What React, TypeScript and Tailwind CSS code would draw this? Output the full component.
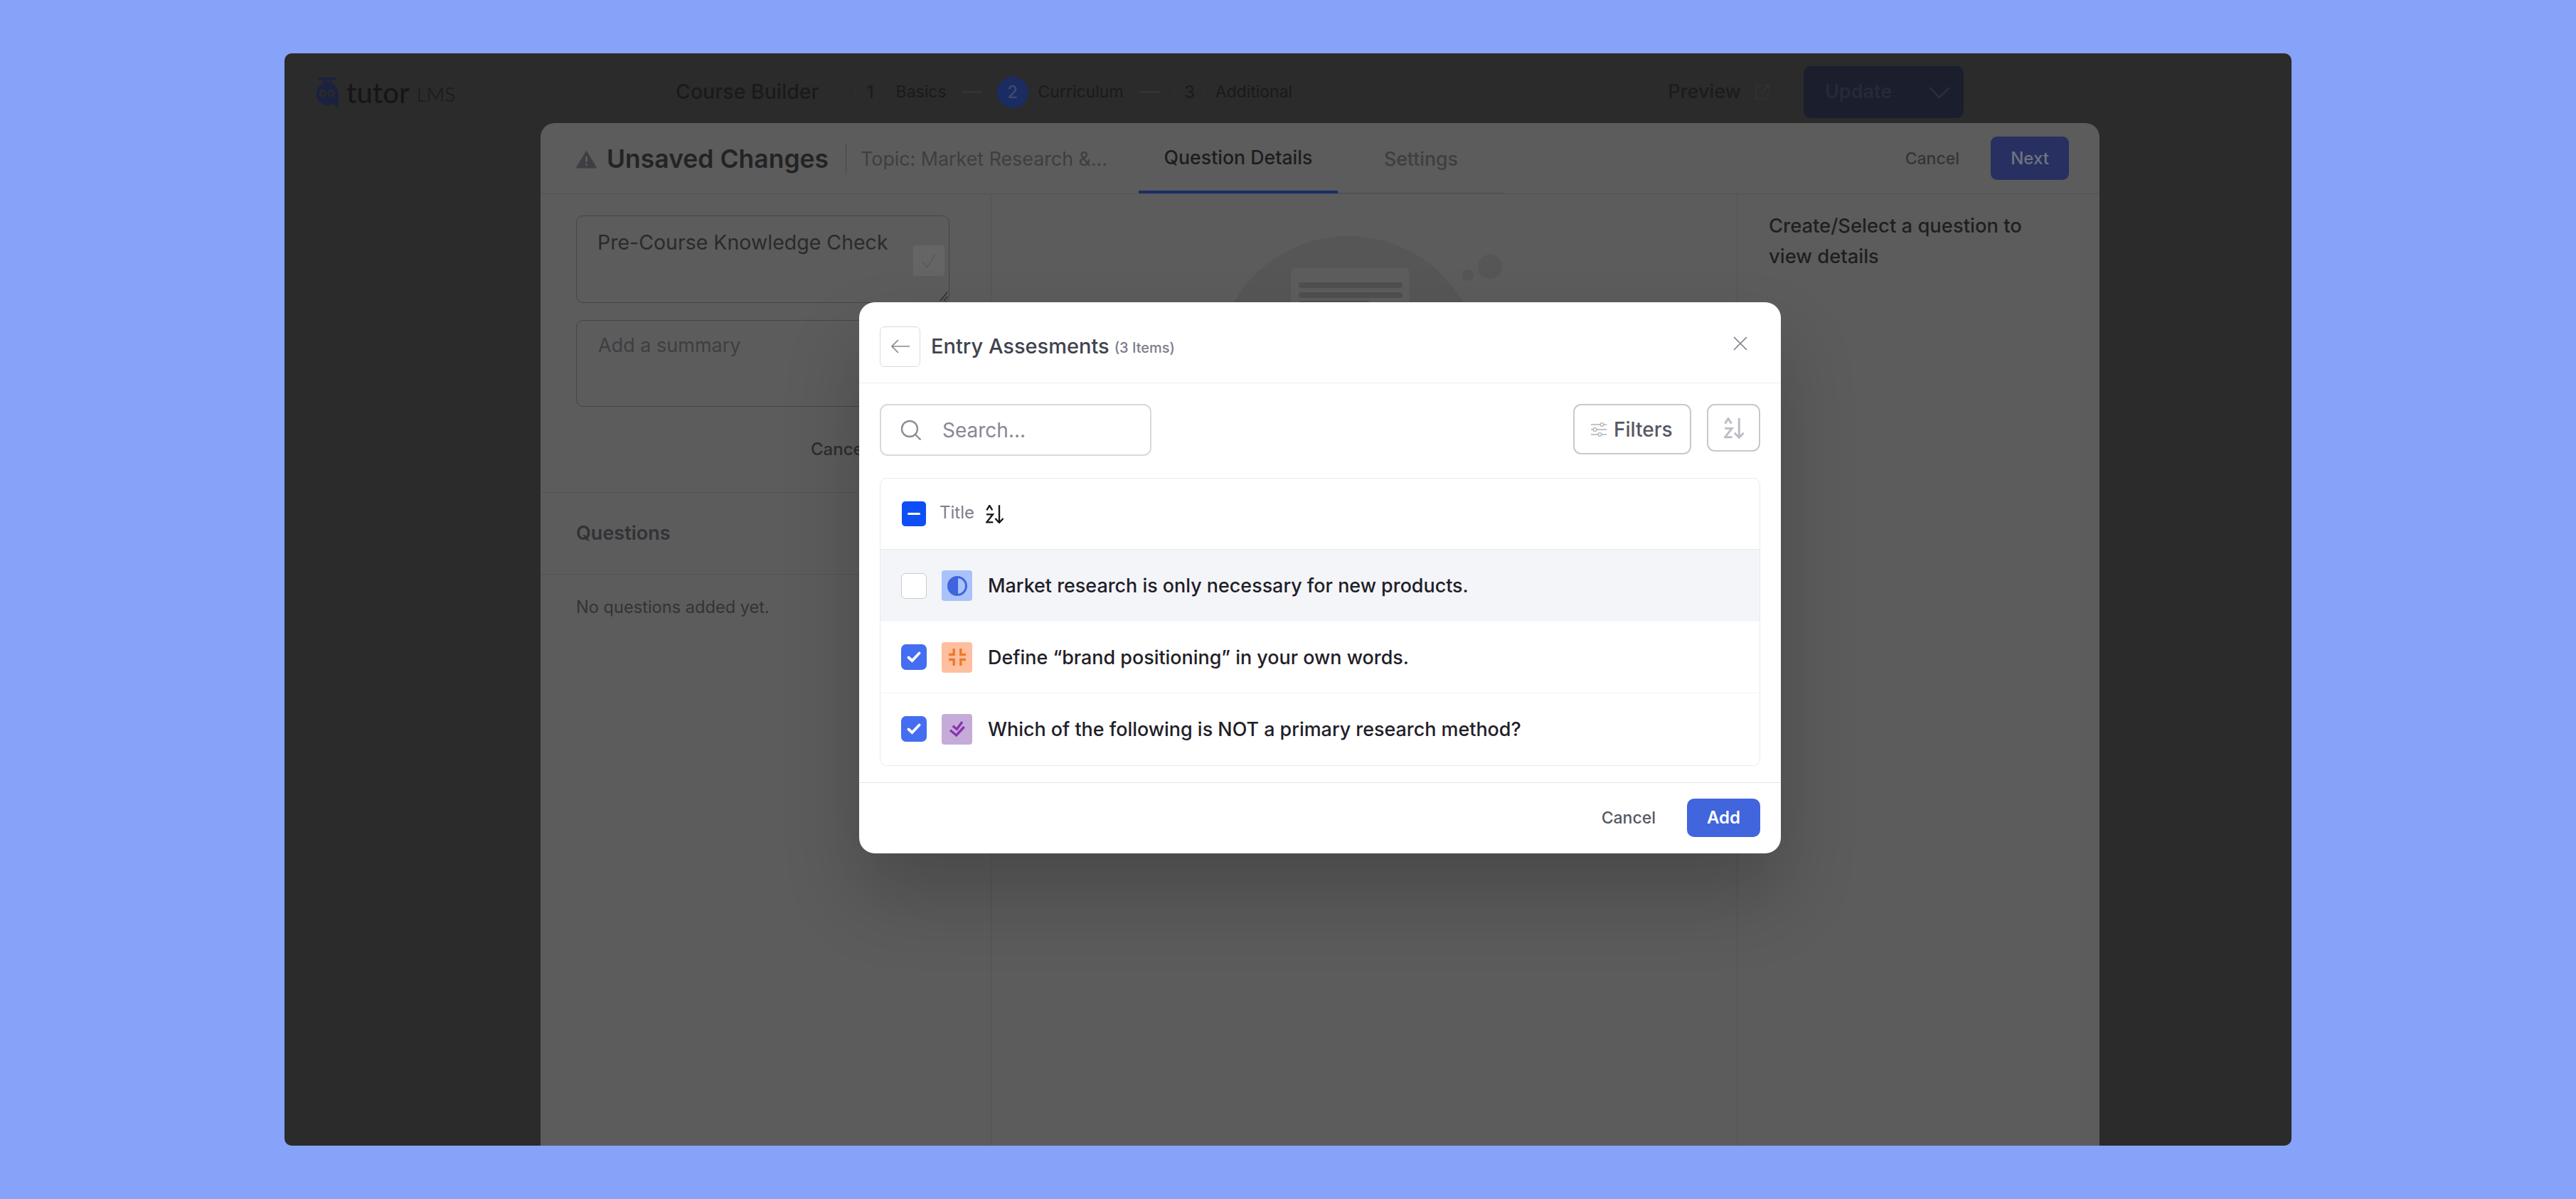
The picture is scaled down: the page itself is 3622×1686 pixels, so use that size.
import React from "react";

function AzIcon({ className, sw = 6 }: { className?: string; sw?: number }) {
  return (
    <svg viewBox="0 0 75 78" fill="none" stroke="currentColor" strokeWidth={sw} className={className}>
      <path d="M4 22 L16 3 L28 22" />
      <path d="M3 40 H30 L4 73 H31" />
      <path d="M57 1 V75" />
      <path d="M40 57 L57 75 L74 57" />
    </svg>
  );
}

function Owl() {
  return (
    <svg viewBox="0 0 32 42" className="w-[32px] h-[42px] shrink-0">
      <rect x="3" y="0" width="26" height="3.4" rx="1" fill="#1b2240" />
      <path d="M11 3H21L23 9H9Z" fill="#1b2240" />
      <path d="M16 7A16 16 0 0 1 32 23V42H30L24.5 37A16 16 0 1 1 16 7Z" fill="#1b2240" />
      <rect x="13" y="3.5" width="2" height="3" fill="#2b2b2b" />
      <rect x="17" y="3.5" width="2" height="3" fill="#2b2b2b" />
      <circle cx="10" cy="22" r="5.2" fill="#2b2b2b" />
      <circle cx="22" cy="22" r="5.2" fill="#2b2b2b" />
      <circle cx="10.5" cy="22" r="2.6" fill="#1b2240" />
      <circle cx="21.5" cy="22" r="2.6" fill="#1b2240" />
    </svg>
  );
}

function Check() {
  return (
    <div className="w-[36px] h-[36px] rounded-[7px] bg-[#446df2] flex items-center justify-center shrink-0">
      <svg viewBox="0 0 20 16" fill="none" stroke="#fff" strokeWidth="3.8" strokeLinecap="round" className="w-[20px] h-[16px]">
        <path d="M2.5 8.5 L7.5 13 L17.5 2.5" />
      </svg>
    </div>
  );
}

function Row({
  box,
  tile,
  icon,
  text,
  className,
}: {
  box: React.ReactNode;
  tile: string;
  icon: React.ReactNode;
  text: string;
  className: string;
}) {
  return (
    <div className={`flex items-center pl-[29px] ${className}`}>
      {box}
      <div className={`ml-[21px] w-[43px] h-[43px] rounded-[4px] flex items-center justify-center shrink-0 ${tile}`}>{icon}</div>
      <span className="ml-[22px] text-[26.9px] font-medium text-[#1f2028] leading-none">{text}</span>
    </div>
  );
}

function Step({ n, label, line, active }: { n: string; label: string; line?: boolean; active?: boolean }) {
  return (
    <div className="flex items-center">
      <div
        className={`w-[44px] h-[44px] rounded-full flex items-center justify-center text-[24px] font-medium ${
          active ? "bg-[#1b2c63] text-[#3f4a6e]" : "border border-[#303030] text-[#1c1c1c]"
        }`}
      >
        {n}
      </div>
      <span className="ml-[14px] text-[23px] text-[#1a1a1a]">{label}</span>
      {line && <div className="ml-[22px] w-[28px] h-[3px] bg-[#333333]" />}
    </div>
  );
}

export default function App() {
  return (
    <div className="w-[3622px] h-[1686px] bg-[#87a3f9] pt-[75px] pl-[400px] overflow-hidden font-['Inter',sans-serif]">
      <div className="relative w-[2822px] h-[1536px] rounded-[10px] overflow-hidden bg-[#2b2b2b] flex flex-col">
        {/* top bar */}
        <div className="h-[98px] shrink-0 pt-[18px] pl-[44px] pr-[461px] flex items-start">
          <div className="h-[73px] w-full flex items-center">
            <div className="flex items-center w-[194px]">
              <Owl />
              <span className="ml-[11px] text-[40px] font-medium text-[#161616] leading-none font-['Lato',sans-serif]">tutor</span>
              <span className="ml-[10px] text-[28px] font-light text-[#191919] leading-none mt-[5px] font-['Lato',sans-serif]">LMS</span>
            </div>
            <span className="ml-[312px] text-[28.5px] font-medium text-[#1a1a1a]">Course Builder</span>
            <div className="ml-[50px] flex items-center gap-[21px]">
              <Step n="1" label="Basics" line />
              <Step n="2" label="Curriculum" line active />
              <Step n="3" label="Additional" />
            </div>
            <span className="ml-auto text-[27px] font-medium text-[#1c1c1c]">Preview</span>
            <svg viewBox="0 0 24 24" fill="none" stroke="#333333" strokeWidth="1.6" className="ml-[18px] w-[24px] h-[26px]">
              <path d="M12 3H3V21H20V12M11 13L21 2M15 2H21V8" />
            </svg>
            <div className="ml-[46px] w-[225px] h-[73px] rounded-[10px] bg-[#1a1e2d] flex items-center pl-[30px]">
              <span className="text-[27px] font-semibold text-[#252a3a]">Update</span>
              <svg viewBox="0 0 30 16" fill="none" stroke="#2b3042" strokeWidth="2.4" className="ml-[52px] w-[30px] h-[16px]">
                <path d="M1 1 L15 15 L29 1" />
              </svg>
            </div>
          </div>
        </div>

        {/* panel */}
        <div className="ml-[360px] w-[2192px] flex-1 rounded-t-[20px] bg-[#5c5c5c] flex flex-col min-h-0">
          <div className="h-[100px] shrink-0 border-b border-[#535353] flex items-center pl-[50px] pr-[43px] pt-[2px]">
            <svg viewBox="0 0 30 26" className="w-[29px] h-[26px] shrink-0">
              <path d="M15 1 L29 24 Q29.5 25.5 28 25.5 H2 Q0.5 25.5 1 24 Z" fill="#3f3f43" stroke="#3f3f43" strokeLinejoin="round" />
              <path d="M15 9V17M15 19.5V22" stroke="#6a6a6d" strokeWidth="2" />
            </svg>
            <span className="ml-[14px] text-[35.5px] font-semibold text-[#232326] whitespace-nowrap">Unsaved Changes</span>
            <div className="ml-[24px] w-px h-[43px] bg-[#464649]" />
            <span className="ml-[20px] text-[26.8px] text-[#3e3e42] whitespace-nowrap">Topic: Market Research &amp;...</span>
            <div className="ml-[44px] self-stretch -mt-[2px] flex relative">
              <div className="w-[280px] border-b-[4px] border-[#1a2d68] rounded-b-none pt-[2px] flex items-center justify-center text-[26.7px] font-medium text-[#1c1c1f]">
                Question Details
              </div>
              <div className="w-[234px] border-b border-[#4d4d4d] pt-[2px] flex items-center justify-center text-[26.7px] font-medium text-[#3e3e42]">
                Settings
              </div>
            </div>
            <span className="ml-auto text-[23px] font-medium text-[#343438]">Cancel</span>
            <div className="ml-[44px] -mt-[2px] w-[110px] h-[61px] rounded-[9px] bg-[#273060] flex items-center justify-center text-[24px] font-medium text-[#6f7480]">
              Next
            </div>
          </div>
          <div className="flex-1 flex min-h-0">
            <div className="w-[634px] shrink-0 border-r border-[#535353] flex flex-col">
              <div className="pt-[30px] px-[50px]">
                <div className="relative w-[525px] h-[123px] rounded-[10px] border border-[#454548] pl-[29px] pt-[17px] text-[28.5px] leading-[40px] text-[#2a2a2d]">
                  Pre-Course Knowledge Check
                  <div className="absolute left-[473px] top-[41px] w-[44px] h-[43px] rounded-[3px] bg-[#656565] flex items-center justify-center">
                    <svg viewBox="0 0 22 22" fill="none" stroke="#585858" strokeWidth="1.4" className="w-[22px] h-[22px]">
                      <path d="M2 12 L8 20 L20 2" />
                    </svg>
                  </div>
                  <svg viewBox="0 0 12 14" fill="none" stroke="#2a2a2a" strokeWidth="1.3" className="absolute right-[1px] bottom-[1px] w-[12px] h-[14px]">
                    <path d="M1 13 L11 1 M6 13 L11 7" />
                  </svg>
                </div>
                <div className="mt-[24px] w-[525px] h-[122px] rounded-[10px] border border-[#454548] pl-[30px] pt-[15px] text-[27px] leading-[40px] text-[#3e3e42]">
                  Add a summary
                </div>
                <div className="mt-[48px] pl-[330px] text-[24px] font-medium leading-none text-[#2c2c30]">Cancel</div>
              </div>
              <div className="mt-[48px] h-[116px] border-y border-[#535353] flex items-center pl-[50px] text-[27px] font-semibold text-[#323236]">
                Questions
              </div>
              <div className="pl-[50px] pt-[31px] text-[23.6px] leading-[30px] text-[#333337]">No questions added yet.</div>
            </div>
            <div className="w-[1049px] shrink-0 border-r border-[#535353] pt-[59px]">
              <svg viewBox="0 0 480 200" className="ml-[270px] w-[480px] h-[200px]">
                <circle cx="232" cy="186" r="186" fill="#565656" />
                <path d="M151 53 Q151 45 159 45 H310 Q318 45 318 53 V200 H151 Z" fill="#5d5d5d" />
                <rect x="162" y="65" width="146" height="8" rx="4" fill="#4f4f4f" />
                <rect x="162" y="79" width="146" height="8" rx="4" fill="#4f4f4f" />
                <rect x="162" y="91" width="100" height="8" rx="4" fill="#4f4f4f" />
                <circle cx="431" cy="43" r="17" fill="#565656" />
                <circle cx="400" cy="55" r="8" fill="#565656" />
              </svg>
            </div>
            <div className="pl-[44px] pt-[23px] text-[27.4px] leading-[43px] font-medium text-[#1f1f22] w-[420px]">
              Create/Select a question to view details
            </div>
          </div>
        </div>

        {/* modal */}
        <div className="absolute left-[808px] top-[350px] w-[1296px] h-[775px] rounded-[22px] bg-white shadow-[0_60px_110px_rgba(0,0,0,0.2)] flex flex-col">
          <div className="h-[114px] shrink-0 border-b border-[#e9eaee] pl-[29px] pr-[47px] pt-[11px] flex items-center">
            <div className="w-[57px] h-[57px] rounded-[7px] border border-[#d9dade] flex items-center justify-center">
              <svg viewBox="0 0 26 20" fill="none" stroke="#878993" strokeWidth="1.7" className="w-[26px] h-[20px]">
                <path d="M26 10H1M10 1L1 10L10 19" />
              </svg>
            </div>
            <span className="ml-[15px] text-[29px] font-medium text-[#41434e] whitespace-nowrap">Entry Assesments</span>
            <span className="ml-[7px] mt-[4px] text-[20px] font-medium text-[#7b7d88] whitespace-nowrap">(3 Items)</span>
            <svg viewBox="0 0 20 20" fill="none" stroke="#7f818c" strokeWidth="1.7" className="ml-auto -mt-[8px] w-[20px] h-[20px]">
              <path d="M1 1L19 19M19 1L1 19" />
            </svg>
          </div>
          <div className="px-[29px] pt-[29px] flex items-start">
            <div className="w-[382px] h-[73px] rounded-[11px] border-2 border-[#d8d9dd] flex items-center pl-[27px]">
              <svg viewBox="0 0 30 30" fill="none" stroke="#8b8d97" strokeWidth="2.4" className="w-[30px] h-[30px]">
                <circle cx="13" cy="13" r="11" />
                <path d="M21 21L28.5 28.5" />
              </svg>
              <span className="ml-[29px] text-[28px] text-[#868893]">Search...</span>
            </div>
            <div className="ml-auto w-[166px] h-[71px] rounded-[11px] border-2 border-[#c8c9cd] flex items-center pl-[23px]">
              <svg viewBox="0 0 22 20" fill="none" stroke="#b0b1b8" strokeWidth="1.3" className="w-[22px] h-[20px]">
                <path d="M0 3H13M18 3H22M0 10H3M8 10H22M0 17H10M15 17H22" />
                <circle cx="15.5" cy="3" r="2.4" />
                <circle cx="5.5" cy="10" r="2.4" />
                <circle cx="12.5" cy="17" r="2.4" />
              </svg>
              <span className="ml-[10px] text-[28px] font-medium text-[#565862]">Filters</span>
            </div>
            <div className="ml-[22px] w-[75px] h-[67px] rounded-[11px] border-2 border-[#c8c9cd] flex items-center justify-center text-[#bdbec4]">
              <AzIcon className="w-[28px] h-[30px]" sw={8} />
            </div>
          </div>
          <div className="mx-[29px] mt-[31px] h-[405px] rounded-[10px] border border-[#e9eaee] flex flex-col overflow-hidden">
            <div className="h-[100px] shrink-0 border-b border-[#e9eaee] flex items-center pl-[30px]">
              <div className="w-[34px] h-[35px] rounded-[5px] bg-[#0d4ef7] flex items-center justify-center">
                <div className="w-[18px] h-[3.5px] bg-white rounded-full" />
              </div>
              <span className="ml-[19px] -mt-[3px] text-[24px] text-[#7d7f8a]">Title</span>
              <AzIcon className="ml-[16px] w-[25px] h-[26px] text-[#16161a]" sw={7} />
            </div>
            <Row
              className="h-[102px] bg-[#f4f5f9]"
              box={<div className="w-[36px] h-[36px] rounded-[6px] bg-white border border-[#c9cbd1] shrink-0" />}
              tile="bg-[#a9c2fb]"
              icon={
                <svg viewBox="0 0 28 28" className="w-[28px] h-[28px]">
                  <circle cx="14" cy="14" r="12.5" fill="none" stroke="#3f64dc" strokeWidth="3" />
                  <path d="M15 1.5A12.5 12.5 0 0 0 15 26.5Z" fill="#3f64dc" />
                </svg>
              }
              text="Market research is only necessary for new products."
            />
            <Row
              className="h-[101px] border-b border-[#f1f2f5]"
              box={<Check />}
              tile="bg-[#ffbf9f]"
              icon={
                <svg viewBox="0 0 70 70" fill="none" stroke="#ee7a2c" strokeWidth="10" className="w-[24px] h-[24px]">
                  <path d="M21 0V25H0M49 0V25H70M21 70V45H0M49 70V45H70" />
                </svg>
              }
              text="Define “brand positioning” in your own words."
            />
            <Row
              className="h-[102px]"
              box={<Check />}
              tile="bg-[#c5acd8]"
              icon={
                <svg viewBox="0 0 66 70" fill="none" stroke="#8a33ad" strokeWidth="10" className="w-[22px] h-[24px]">
                  <path d="M14 22 L31 36 L54 5" />
                  <path d="M3 40 L29 62 L62 26" />
                </svg>
              }
              text="Which of the following is NOT a primary research method?"
            />
          </div>
          <div className="mt-[23px] flex-1 border-t border-[#e5e6ea] flex items-start justify-end pt-[22px] pr-[29px]">
            <div className="h-[54px] flex items-center text-[23px] font-medium text-[#565862]">Cancel</div>
            <div className="ml-[44px] w-[103px] h-[54px] rounded-[10px] bg-[#4065dc] flex items-center justify-center text-[24px] font-semibold text-white">
              Add
            </div>
          </div>
        </div>
      </div>
    </div>
  );
}
